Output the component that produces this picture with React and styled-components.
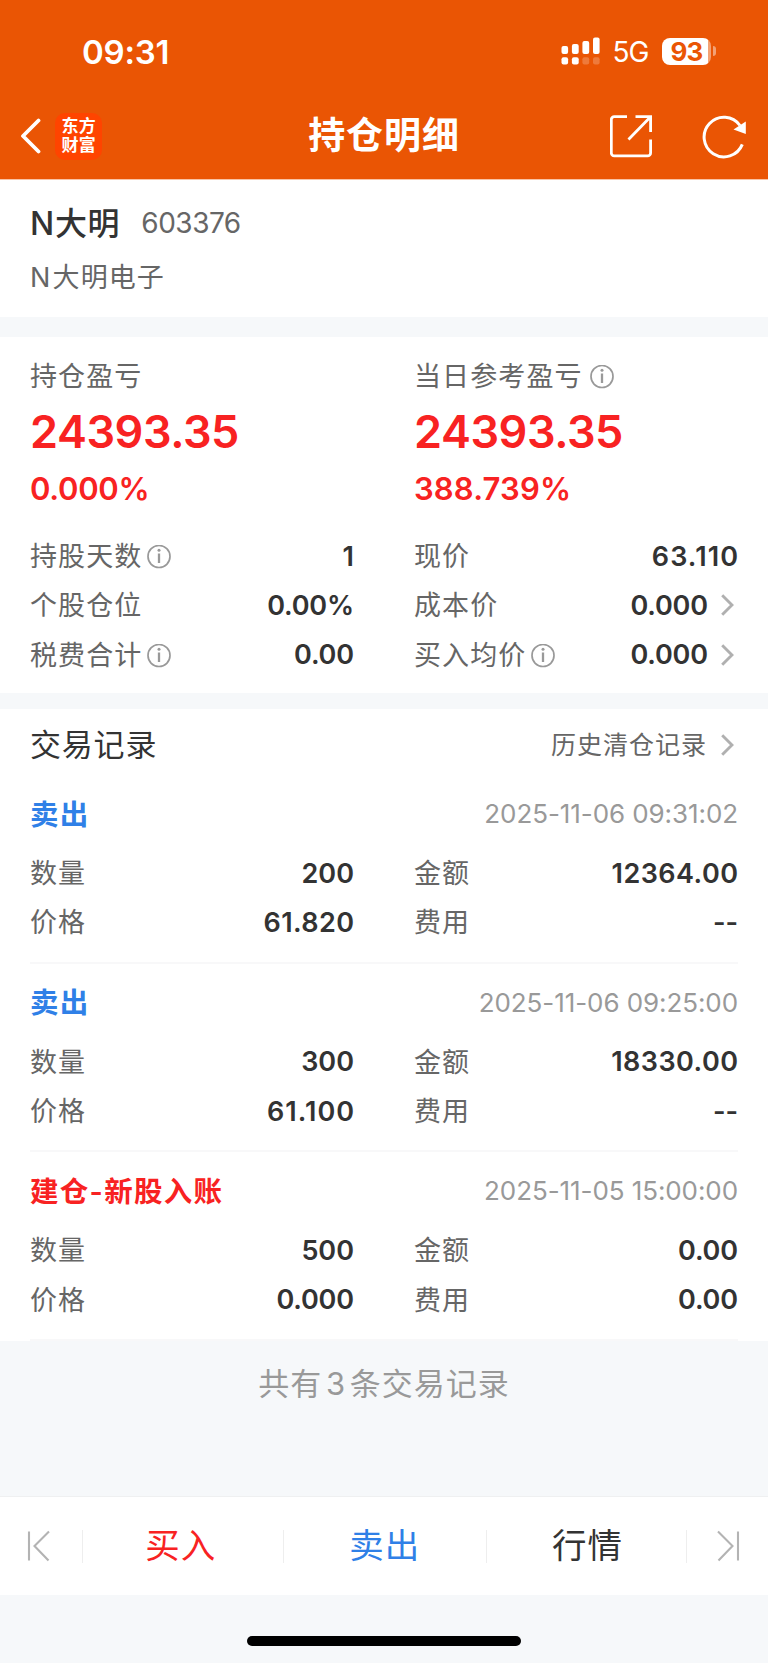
import React from "react";
import styled, { createGlobalStyle } from "styled-components";

const GlobalStyle = createGlobalStyle`
  * { box-sizing: border-box; }
  body {
    margin: 0;
    background: #f6f8fa;
    font-family: Inter, "Noto Sans CJK SC", sans-serif;
    color: #333;
  }
`;

const Screen = styled.div`
  width: 768px;
  height: 1663px;
  display: flex;
  flex-direction: column;
  background: #f6f8fa;
  overflow: hidden;
`;

const Header = styled.header`
  height: 180px;
  background: #ea5504;
  border-bottom: 1px solid #f9c3a5;
  color: #fff;
`;

const StatusBar = styled.div`
  height: 94px;
  padding: 8.5px 52.5px 0 82px;
  display: flex;
  align-items: center;
`;

const Clock = styled.div`
  flex: 1;
  padding-top: 2px;
  font-size: 33px;
  font-weight: 600;
  letter-spacing: -0.2px;
`;

const Network = styled.div`
  padding-top: 2px;
  font-size: 28px;
  margin: 0 13.5px 0 13px;
  letter-spacing: -1px;
`;

const Battery = styled.div`
  width: 49px;
  height: 27px;
  border-radius: 8px;
  background: linear-gradient(90deg, #fff 46px, rgba(255, 255, 255, 0.45) 46px);
  color: #ea5504;
  font-size: 26px;
  font-weight: 700;
  line-height: 27px;
  text-align: center;
  letter-spacing: -0.8px;
`;

const BatteryTip = styled.div`
  width: 3px;
  height: 10px;
  margin-left: 1.5px;
  border-radius: 0 4px 4px 0;
  background: rgba(255, 255, 255, 0.45);
`;

const NavBar = styled.div`
  height: 84px;
  padding: 0 21px 0 20px;
  display: grid;
  grid-template-columns: 1fr auto 1fr;
  align-items: center;
`;

const NavSide = styled.div`
  display: flex;
  align-items: center;
  justify-content: ${(p) => (p.$end ? "flex-end" : "flex-start")};
  gap: ${(p) => (p.$end ? "49px" : "14px")};
  padding-top: ${(p) => (p.$end ? "1px" : "0")};
`;

const BrandLogo = styled.div`
  width: 47px;
  height: 47px;
  border-radius: 10px;
  background: #ff4400;
  padding: 4px 0 0 6.5px;
  font-family: "Liberation Sans", "Noto Sans CJK SC", sans-serif;
  font-size: 17px;
  font-weight: 700;
`;

const LogoLine = styled.div`
  height: 19.5px;
  line-height: 19.5px;
  letter-spacing: 0.3px;
`;

const NavTitle = styled.h1`
  margin: 0 0 0 1px;
  font-size: 37px;
  font-weight: 600;
  letter-spacing: 0.9px;
  line-height: 50px;
`;

const Panel = styled.section`
  background: #fff;
  padding: ${(p) => p.$pad || "0 30px"};
  height: ${(p) => p.$height}px;
  margin-bottom: ${(p) => p.$gap || 0}px;
  flex: none;
`;

const StockTitle = styled.div`
  display: flex;
  align-items: center;
  height: 50px;
  margin-bottom: 6px;
`;

const StockName = styled.div`
  margin-top: -5px;
  font-size: 32px;
  font-weight: 500;
  letter-spacing: 0.7px;
`;

const StockCode = styled.div`
  margin-left: 21px;
  font-size: 28px;
  color: #666;
  letter-spacing: -0.5px;
`;

const Label = styled.div`
  display: flex;
  align-items: center;
  gap: ${(p) => p.$gap || 5}px;
  padding-top: 2px;
  font-size: 27px;
  line-height: 44px;
  letter-spacing: 1.1px;
  color: #666;
`;

const MarketPrefix = styled.span`
  margin-right: 1px;
`;

const Columns = styled.div`
  display: grid;
  grid-template-columns: 324px 324px;
  column-gap: 60px;
`;

const Profit = styled.div`
  margin-top: 5px;
  font-size: 45px;
  line-height: 56px;
  font-weight: 600;
  letter-spacing: -0.45px;
  color: #f82222;
`;

const ProfitRate = styled.div`
  margin: 9px 0 22.5px;
  font-size: 31px;
  line-height: 40px;
  font-weight: 600;
  letter-spacing: ${(p) => p.$track || 0}px;
  color: #f82222;
`;

const DataRow = styled.div`
  height: 49.25px;
  display: flex;
  align-items: center;
  justify-content: space-between;
`;

const Value = styled.div`
  display: flex;
  align-items: center;
  gap: 13px;
  padding-right: ${(p) => (p.$link ? 4 : 0)}px;
  margin-right: ${(p) => -p.$track}px;
  font-size: 27px;
  font-weight: 600;
  letter-spacing: ${(p) => p.$track}px;
  color: #333;
`;

const ListHeader = styled.div`
  height: 66px;
  padding-top: 5px;
  display: flex;
  align-items: center;
  justify-content: space-between;
`;

const ListTitle = styled.div`
  padding-bottom: 4px;
  font-size: 31px;
  letter-spacing: 0.8px;
`;

const HistoryLink = styled.div`
  display: flex;
  align-items: center;
  gap: 14px;
  padding-right: 4px;
  font-size: 25px;
  letter-spacing: 1px;
  color: #666;
`;

const HistoryText = styled.span`
  padding-bottom: 3px;
`;

const Record = styled.article`
  height: 188.66px;
  padding-top: 18px;
  border-bottom: 2px solid #f8f8f9;
`;

const RecordHead = styled.div`
  height: 40px;
  margin-bottom: 15.5px;
  display: flex;
  align-items: center;
  justify-content: space-between;
`;

const Action = styled.div`
  padding-bottom: 2px;
  font-size: 28.5px;
  font-weight: 600;
  letter-spacing: 1.3px;
  color: ${(p) => (p.$buy ? "#f82222" : "#2f80e7")};
`;

const Timestamp = styled.div`
  padding-top: 1px;
  font-size: 26px;
  color: #999;
  letter-spacing: -0.08px;
`;

const Total = styled.div`
  height: 155px;
  padding-top: 22px;
  flex: none;
  text-align: center;
  font-size: 31px;
  line-height: 42px;
  letter-spacing: 1px;
  word-spacing: -6px;
  color: #999;
`;

const BottomBar = styled.nav`
  height: 99px;
  flex: none;
  border-top: 1px solid #eff0f1;
  background: #fff;
  display: grid;
  grid-template-columns: 82px 200.5px 203.5px 200px 82px;
  align-items: center;
`;

const Tab = styled.div`
  height: 33px;
  display: flex;
  align-items: center;
  justify-content: center;
  border-left: ${(p) => (p.$first ? "0" : "1px solid #eee")};
  padding: ${(p) => p.$pad || "0"};
  font-size: 34.5px;
  line-height: 40px;
  letter-spacing: 1px;
  color: ${(p) => p.$color || "#333"};
`;

const HomeIndicator = styled.div`
  width: 274px;
  height: 10px;
  margin: 41px auto 0;
  flex: none;
  border-radius: 5px;
  background: #000;
`;

const SignalIcon = () => (
  <svg width="39" height="28" viewBox="0 0 39 28" fill="#fff">
    <rect x="0.5" y="9" width="6.6" height="8" rx="2" />
    <rect x="10.9" y="7" width="6.8" height="10" rx="2" />
    <rect x="21.4" y="4" width="6.8" height="13" rx="2" />
    <rect x="32" y="0.4" width="6.6" height="16.6" rx="2" />
    <rect x="0.5" y="20.3" width="6.6" height="7.3" rx="2" />
    <rect x="10.9" y="20.3" width="6.8" height="7.3" rx="2" />
    <rect x="21.4" y="20.3" width="6.8" height="7.3" rx="2" opacity="0.22" />
    <rect x="32" y="20.3" width="6.6" height="7.3" rx="2" opacity="0.22" />
  </svg>
);

const BackIcon = () => (
  <svg width="21" height="36" viewBox="0 0 21 36" fill="none" stroke="#fff" strokeWidth="3.8" strokeLinecap="round" strokeLinejoin="round">
    <path d="M18.5 2.5 3 18l15.5 15.5" />
  </svg>
);

const ShareIcon = () => (
  <svg width="43" height="43" viewBox="0 0 43 43" fill="none" stroke="#fff" strokeWidth="2.8">
    <path d="M17 1.7H4.3a3 3 0 0 0-3 3V37.900a3 3 0 0 0 3 3H37.600a3 3 0 0 0 3-3V24.500" />
    <path d="M25.5 1.7H40.6V17M40.6 1.7 18.5 24.5" />
  </svg>
);

const RefreshIcon = () => (
  <svg width="45" height="44" viewBox="0 0 45 44" fill="none">
    <path d="M40.3 29.4A19.800 19.800 0 1 1 38 10.500" stroke="#fff" strokeWidth="3" />
    <path d="M43.8 6.500V19L31.500 14.500Z" fill="#fff" />
  </svg>
);

const InfoIcon = () => (
  <svg width="24" height="24" viewBox="0 0 24 24" fill="none" stroke="#999" strokeWidth="1.7">
    <circle cx="12" cy="11.5" r="11" />
    <path d="M12 8.500V18" strokeWidth="2.3" />
    <circle cx="12" cy="5.300" r="1.500" fill="#999" stroke="none" />
  </svg>
);

const ChevronIcon = () => (
  <svg width="13" height="22" viewBox="0 0 13 22" fill="none" stroke="#b0b0b0" strokeWidth="2.9">
    <path d="M1.2 1.200 11 11 1.200 20.800" />
  </svg>
);

const EndIcon = ({ flip }) => (
  <svg width="24" height="32" viewBox="0 0 24 32" fill="none" stroke="#b3b3b3" strokeWidth="2.1">
    <path d={flip ? "M21 1.500V30.500M1 1.500 15.500 16 1.500 30.500" : "M3 1.500V30.500M23 1.500 8.500 16 22.500 30.500"} />
  </svg>
);

const Item = ({ label, value, info, link, track = -0.2 }) => (
  <DataRow>
    <Label>
      {label}
      {info && <InfoIcon />}
    </Label>
    <Value $link={link} $track={track}>
      {value}
      {link && <ChevronIcon />}
    </Value>
  </DataRow>
);

const records = [
  { action: "卖出", time: "2025-11-06 09:31:02", count: "200", price: "61.820", priceTrack: 0.4, amount: "12364.00", amountTrack: 0.45, fee: "--" },
  { action: "卖出", time: "2025-11-06 09:25:00", count: "300", price: "61.100", priceTrack: 1, amount: "18330.00", amountTrack: 0.45, fee: "--" },
  { action: "建仓-新股入账", buy: true, time: "2025-11-05 15:00:00", count: "500", price: "0.000", amount: "0.00", fee: "0.00" },
];

export default function App() {
  return (
    <Screen>
      <GlobalStyle />
      <Header>
        <StatusBar>
          <Clock>09:31</Clock>
          <SignalIcon />
          <Network>5G</Network>
          <Battery>93</Battery>
          <BatteryTip />
        </StatusBar>
        <NavBar>
          <NavSide>
            <BackIcon />
            <BrandLogo>
              <LogoLine>东方</LogoLine>
              <LogoLine>财富</LogoLine>
            </BrandLogo>
          </NavSide>
          <NavTitle>持仓明细</NavTitle>
          <NavSide $end>
            <ShareIcon />
            <RefreshIcon />
          </NavSide>
        </NavBar>
      </Header>

      <Panel $height={137} $gap={20} $pad="18px 30px 0">
        <StockTitle>
          <StockName>N大明</StockName>
          <StockCode>603376</StockCode>
        </StockTitle>
        <Label $gap={0.1}><MarketPrefix>N</MarketPrefix>大明电子</Label>
      </Panel>

      <Panel $height={356} $gap={16} $pad="16px 30px 0">
        <Columns>
          <div>
            <Label>持仓盈亏</Label>
            <Profit>24393.35</Profit>
            <ProfitRate $track={-0.3}>0.000%</ProfitRate>
            <Item label="持股天数" value="1" info />
            <Item label="个股仓位" value="0.00%" />
            <Item label="税费合计" value="0.00" info />
          </div>
          <div>
            <Label $gap={7.5}>当日参考盈亏<InfoIcon /></Label>
            <Profit>24393.35</Profit>
            <ProfitRate $track={0.15}>388.739%</ProfitRate>
            <Item label="现价" value="63.110" track={1.1} />
            <Item label="成本价" value="0.000" link />
            <Item label="买入均价" value="0.000" info link />
          </div>
        </Columns>
      </Panel>

      <Panel $height={632}>
        <ListHeader>
          <ListTitle>交易记录</ListTitle>
          <HistoryLink>
            <HistoryText>历史清仓记录</HistoryText>
            <ChevronIcon />
          </HistoryLink>
        </ListHeader>
        {records.map((r) => (
          <Record key={r.time}>
            <RecordHead>
              <Action $buy={r.buy}>{r.action}</Action>
              <Timestamp>{r.time}</Timestamp>
            </RecordHead>
            <Columns>
              <Item label="数量" value={r.count} track={0} />
              <Item label="金额" value={r.amount} track={r.amountTrack} />
              <Item label="价格" value={r.price} track={r.priceTrack} />
              <Item label="费用" value={r.fee} />
            </Columns>
          </Record>
        ))}
      </Panel>

      <Total>共有 3 条交易记录</Total>

      <BottomBar>
        <Tab $first $pad="0 7px 0 0"><EndIcon /></Tab>
        <Tab $color="#f82222" $pad="0 4px 0 0">买入</Tab>
        <Tab $color="#2f80e7">卖出</Tab>
        <Tab $pad="0 0 0 2px">行情</Tab>
        <Tab $pad="0 0 0 2px"><EndIcon flip /></Tab>
      </BottomBar>
      <HomeIndicator />
    </Screen>
  );
}
